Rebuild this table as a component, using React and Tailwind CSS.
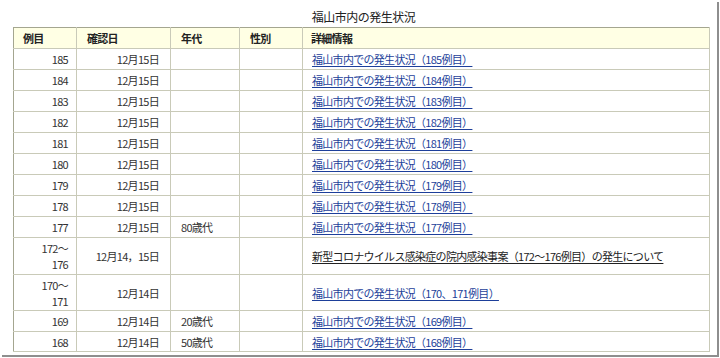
import React from 'react';

const rows = [
  { no: ['185'], date: '12月15日', age: '', link: '福山市内での発生状況（185例目）' },
  { no: ['184'], date: '12月15日', age: '', link: '福山市内での発生状況（184例目）' },
  { no: ['183'], date: '12月15日', age: '', link: '福山市内での発生状況（183例目）' },
  { no: ['182'], date: '12月15日', age: '', link: '福山市内での発生状況（182例目）' },
  { no: ['181'], date: '12月15日', age: '', link: '福山市内での発生状況（181例目）' },
  { no: ['180'], date: '12月15日', age: '', link: '福山市内での発生状況（180例目）' },
  { no: ['179'], date: '12月15日', age: '', link: '福山市内での発生状況（179例目）' },
  { no: ['178'], date: '12月15日', age: '', link: '福山市内での発生状況（178例目）' },
  { no: ['177'], date: '12月15日', age: '80歳代', link: '福山市内での発生状況（177例目）' },
  {
    no: ['172～', '176'],
    date: '12月14，15日',
    age: '',
    link: '新型コロナウイルス感染症の院内感染事案（172～176例目）の発生について',
    dark: true,
  },
  { no: ['170～', '171'], date: '12月14日', age: '', link: '福山市内での発生状況（170、171例目）' },
  { no: ['169'], date: '12月14日', age: '20歳代', link: '福山市内での発生状況（169例目）' },
  { no: ['168'], date: '12月14日', age: '50歳代', link: '福山市内での発生状況（168例目）', last: true },
];

const cell = 'border-r border-b border-[#c9cab8] px-0 align-middle';

export default function App() {
  return (
    <div
      className="w-[720px] h-[358px] bg-white overflow-hidden"
      style={{ fontFamily: '"Noto Sans CJK JP", "Noto Sans", sans-serif' }}
    >
      <div className="w-[717px] h-[355px] bg-white shadow-[2px_2px_0_0_#8e8e8e] flex flex-col pl-[13px] pr-[7px]">
        {/* title */}
        <div className="h-[27px] flex items-center justify-center text-[12px] tracking-[-0.5px] text-[#222] pt-[6px] pl-[4px]">
          福山市内の発生状況
        </div>

        <table className="table-fixed border-collapse w-[697px] border border-[#a4a690] text-[11px] tracking-[-0.7px] leading-[16px] text-[#333]">
          <colgroup>
            <col className="w-[63px]" />
            <col className="w-[94px]" />
            <col className="w-[69px]" />
            <col className="w-[63px]" />
            <col />
          </colgroup>
          <thead>
            <tr className="h-[21px] bg-[#ffffe4] font-bold text-[#222]">
              <th className={`${cell} text-left pl-[9px]`}>例目</th>
              <th className={`${cell} text-left pl-[10px]`}>確認日</th>
              <th className={`${cell} text-left pl-[10px]`}>年代</th>
              <th className={`${cell} text-left pl-[10px]`}>性別</th>
              <th className={`${cell} text-left pl-[8px]`}>詳細情報</th>
            </tr>
          </thead>
          <tbody>
            {rows.map((r, i) => (
              <tr
                key={i}
                className={r.no.length > 1 ? (i === 9 ? 'h-[37px]' : 'h-[36px]') : r.last ? 'h-[20px]' : 'h-[21px]'}
              >
                <td className={`${cell} text-right pr-[8px]`}>
                  {r.no.map((n, k) => (
                    <div key={k}>{n}</div>
                  ))}
                </td>
                <td className={`${cell} text-right pr-[11px]`}>{r.date}</td>
                <td className={`${cell} text-left pl-[10px]`}>{r.age}</td>
                <td className={cell}></td>
                <td className={`${cell} text-left pl-[9px]`}>
                  <a
                    href="#"
                    className={`underline underline-offset-2 ${r.dark ? 'text-[#222]' : 'text-[#1d3f9a]'}`}
                  >
                    {r.link}
                  </a>
                </td>
              </tr>
            ))}
          </tbody>
        </table>
      </div>
    </div>
  );
}
